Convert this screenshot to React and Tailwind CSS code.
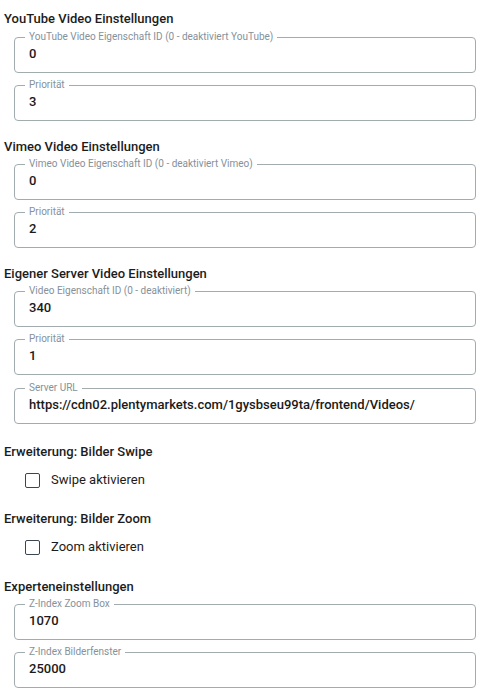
import { useState } from 'react'

const Field = ({ label, value, className = '' }) => (
  <fieldset className={`ml-[10px] w-[462px] border border-[#a2acaf] rounded-[4px] px-[10px] pb-[10px] ${className}`}>
    <legend className='px-1 text-[10px] leading-[12px] text-[#86919a]'>{label}</legend>
    <div className='pl-1 pt-[3px] text-[13px] leading-4 font-medium text-[#1a1a1a]'>{value}</div>
  </fieldset>
)

const Heading = ({ children, className = '' }) => (
  <h2 className={`h-5 leading-5 text-[13px] font-medium text-[#1c1c1c] ${className}`}>{children}</h2>
)

const Check = ({ label }) => {
  const [checked, setChecked] = useState(false)
  return (
    <label className='mt-2 h-5 flex items-center cursor-pointer select-none'>
      <span
        onClick={() => setChecked(!checked)}
        className={`ml-[21px] w-[15px] h-[15px] border-[1.5px] border-[#3b4650] rounded-[2px] ${checked ? 'bg-[#3b4650]' : 'bg-white'}`}
      />
      <span className='ml-[11px] text-[13px] text-[#1c1c1c]'>{label}</span>
    </label>
  )
}

export default function App() {
  return (
    <div className='w-[502px] min-h-[696px] bg-white pt-[9px] pl-1' style={{ fontFamily: 'Roboto, "Noto Sans", sans-serif' }}>
      <Heading>YouTube Video Einstellungen</Heading>
      <Field className='mt-[2px]' label='YouTube Video Eigenschaft ID (0 - deaktiviert YouTube)' value='0' />
      <Field className='mt-[6px]' label='Priorität' value='3' />

      <Heading className='mt-[16px]'>Vimeo Video Einstellungen</Heading>
      <Field className='mt-[1px]' label='Vimeo Video Eigenschaft ID (0 - deaktiviert Vimeo)' value='0' />
      <Field className='mt-[6px]' label='Priorität' value='2' />

      <Heading className='mt-[16px]'>Eigener Server Video Einstellungen</Heading>
      <Field className='mt-[1px]' label='Video Eigenschaft ID (0 - deaktiviert)' value='340' />
      <Field className='mt-[6px]' label='Priorität' value='1' />
      <Field className='mt-[7px]' label='Server URL' value='https://cdn02.plentymarkets.com/1gysbseu99ta/frontend/Videos/' />

      <Heading className='mt-[18px]'>Erweiterung: Bilder Swipe</Heading>
      <Check label='Swipe aktivieren' />

      <Heading className='mt-[19px]'>Erweiterung: Bilder Zoom</Heading>
      <Check label='Zoom aktivieren' />

      <Heading className='mt-[20px]'>Experteneinstellungen</Heading>
      <Field className='mt-[1px]' label='Z-Index Zoom Box' value='1070' />
      <Field className='mt-[6px]' label='Z-Index Bilderfenster' value='25000' />
    </div>
  )
}
